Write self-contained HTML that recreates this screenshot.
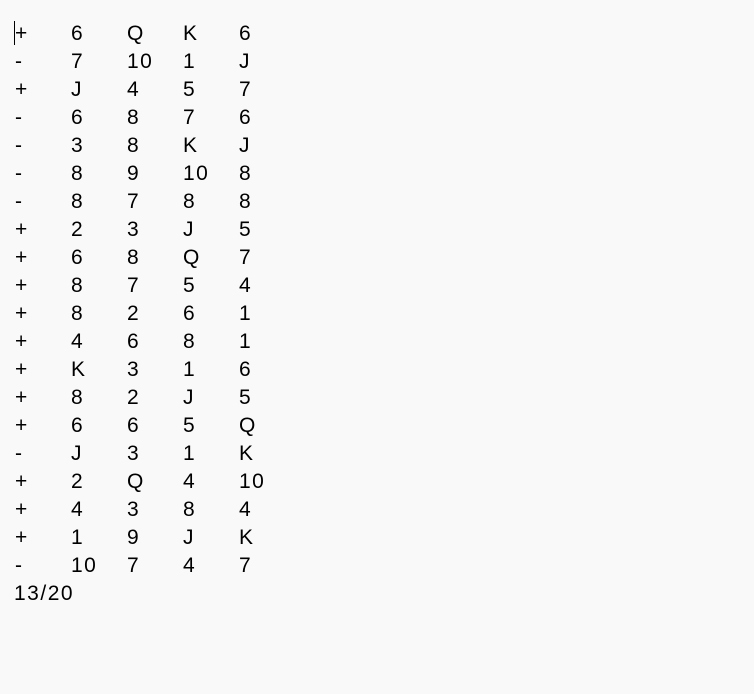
<!DOCTYPE html>
<html><head><style>
html,body{margin:0;background:#f9f9f9;width:754px;height:694px;overflow:hidden}
.w{position:absolute;left:15px;top:19px;font:21px "Liberation Sans",sans-serif;color:#000;letter-spacing:1.5px}
.r{height:28px;line-height:28px;position:relative;white-space:nowrap}
.r span{position:absolute;top:1px}
.c{position:absolute;left:14px;top:21px;width:1px;height:24px;background:#000}
</style></head><body>
<div class="c"></div>
<div class="w" id="w"></div>
<script>
var d=`+ 6 Q K 6
- 7 10 1 J
+ J 4 5 7
- 6 8 7 6
- 3 8 K J
- 8 9 10 8
- 8 7 8 8
+ 2 3 J 5
+ 6 8 Q 7
+ 8 7 5 4
+ 8 2 6 1
+ 4 6 8 1
+ K 3 1 6
+ 8 2 J 5
+ 6 6 5 Q
- J 3 1 K
+ 2 Q 4 10
+ 4 3 8 4
+ 1 9 J K
- 10 7 4 7`.split("\n");
var xs=[0,56,112,168,224],h="";
d.forEach(function(l){h+='<div class="r">';l.split(" ").forEach(function(t,i){h+='<span style="left:'+xs[i]+'px">'+t+'</span>'});h+='</div>'});
h+='<div class="r"><span style="left:-1px">13/20</span></div>';
document.getElementById("w").innerHTML=h;
</script>
</body></html>
